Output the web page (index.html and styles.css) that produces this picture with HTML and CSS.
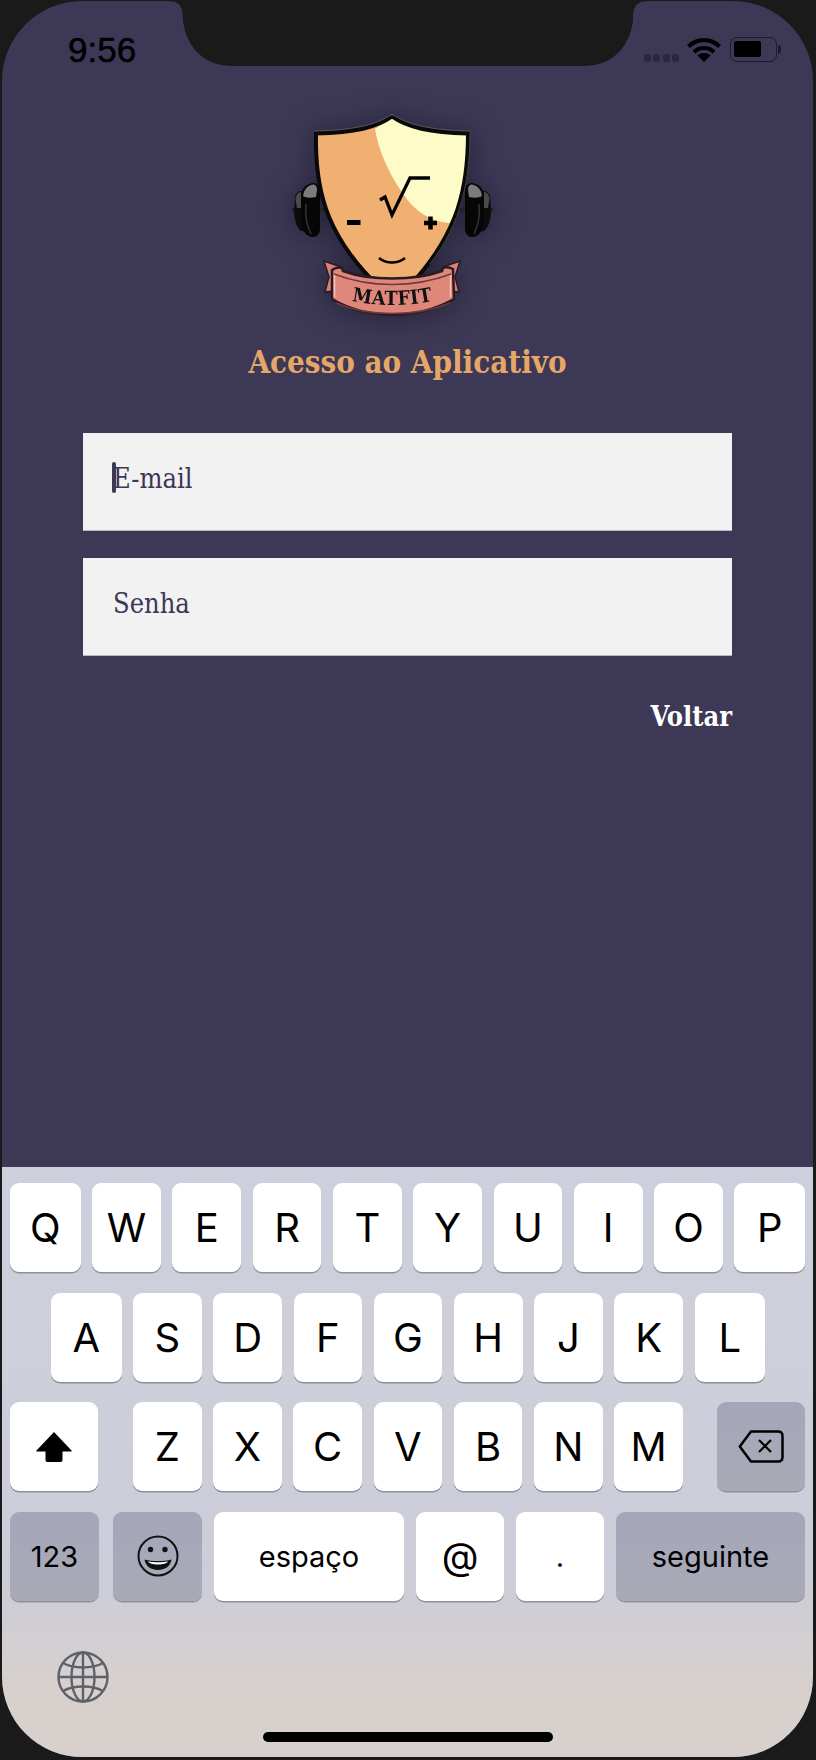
FILE: index.html
```html
<!DOCTYPE html>
<html lang="pt-BR">
<head>
  <meta charset="UTF-8">
  <meta name="viewport" content="width=device-width, initial-scale=1.0">
  <title>Acesso ao Aplicativo</title>
  <link rel="stylesheet" href="styles.css">
</head>
<body>

  <div class="screen">
    <svg class="notch" viewBox="0 0 486 66" width="486" height="66">
      <path d="M0 0H486C472 0 468 4 468 18V20C464 48 446 65 418 65H68C40 65 22 48 18 20V18C18 4 14 0 0 0Z" fill="#1a1a1a"/>
    </svg>

    <div class="app">
      <div class="status">
        <span class="time">9:56</span>
        <div class="status-icons">
          <span class="signal"><i></i><i></i><i></i><i></i></span>
          <svg class="wifi" viewBox="0 0 34 25" width="34" height="25">
            <path d="M1.500 9.500C10 1 24 1 32.500 9.500" fill="none" stroke="#000" stroke-width="4.200"/>
            <path d="M7 15C12.500 9.800 21.500 9.800 27 15" fill="none" stroke="#000" stroke-width="4"/>
            <path d="M17 25L10.500 18.500C14 15.300 20 15.300 23.500 18.500Z" fill="#000"/>
          </svg>
          <div class="battery"><span class="battery-level"></span></div>
          <span class="battery-cap"></span>
        </div>
      </div>

      <svg class="logo" viewBox="0 0 240 230" width="240" height="230">
        <!-- halteres -->
        <g id="peso">
          <rect x="22" y="108" width="34" height="3.500" fill="#222"/>
          <path d="M25 98C25 94 28 91 31 91L38 92V132L31 131C27 128 24 120 24 110Z" fill="#0c0c0c"/>
          <path d="M25.500 99C26 95 28 92 31 92L33 94L32 108L27 108Z" fill="#4a4a4a"/>
          <path d="M31 94C32 88 37 83 44 83C48 84 50 86 50 92V128C50 134 47 137 43 137C36 137 31 130 31 118Z" fill="#060606"/>
          <path d="M33 96C34 89 38 85 44 84.500C46 85 47 87 47 90L46 97C41 98 36 98 33 96Z" fill="#7c7c7c"/>
          <path d="M36 104C35 114 36 124 41 134" fill="none" stroke="#333" stroke-width="1.500"/>
        </g>
        <use href="#peso" transform="translate(245 0) scale(-1 1)"/>

        <!-- escudo -->
        <path d="M122 16C107 27 85 32 46 33C45 88 55 131 102 180L122 192L145 180C188 131 198 88 198 33C160 32 137 27 122 16Z" fill="#efb072"/>
        <path d="M105 29C110 58 125 84 140 103C152 116 165 122 181 123C192 96 197 66 197 33C160 32 137 27 122 16C117 21 110 25 105 29Z" fill="#fdfcc8"/>
        <path d="M122 16.500C107 27.500 85 32.500 46 33.500C45 88 55 131 102 180M145 180C188 131 198 88 198 33.500C160 32.500 137 27.500 122 16.500" fill="none" stroke="#0a0a0a" stroke-width="4"/>
        <path d="M122 14C107 24.500 85 30 44 31" fill="none" stroke="#555" stroke-width="1"/>
        <path d="M122 14C137 24.500 160 30 200 31" fill="none" stroke="#555" stroke-width="1"/>
        <path d="M200 31C200 80 192 122 160 164" fill="none" stroke="#444" stroke-width="1"/>

        <path d="M110 100L115 97L122 115L140 78H160" fill="none" stroke="#000" stroke-width="3.300"/>
        <rect x="77" y="120" width="13.500" height="5" fill="#000"/>
        <path d="M154 123H167M160.500 116.500V129.500" fill="none" stroke="#000" stroke-width="4.500"/>
        <path d="M109 158C116 164 128 164 135 158" fill="none" stroke="#000" stroke-width="2.500"/>

        <!-- faixa -->
        <path d="M54 161L71 167L71 190L55 192L59 177Z" fill="#d98077" stroke="#2a1a22" stroke-width="1.500"/>
        <path d="M190 161L173 167L173 190L189 192L185 177Z" fill="#d98077" stroke="#2a1a22" stroke-width="1.500"/>
        <path d="M62 170C68 166 73 167 73 171C100 181 144 181 172 171C172 167 177 166 183 169L184 199C146 220 98 220 62 199Z" fill="#e0877c" stroke="#2a1a22" stroke-width="2.500"/>
        <path d="M64 174C100 188 144 188 181 174" fill="none" stroke="#6b3c3c" stroke-width="1.500"/>
        <path d="M64.500 175V197M180.500 175V197" fill="none" stroke="#f4c0b8" stroke-width="1.500"/>
        <path d="M66 203C98 217 146 217 180 203" fill="none" stroke="#6b3c3c" stroke-width="1.500"/>
        <path id="arco" d="M83 201Q122 209 162 201" fill="none"/>
        <text class="logo-text"><textPath href="#arco" startOffset="50%" text-anchor="middle">MATFIT</textPath></text>
      </svg>

      <h1>Acesso ao Aplicativo</h1>

      <div class="form">
        <div class="field"><span class="caret"></span>E-mail</div>
        <div class="field">Senha</div>
        <a class="back">Voltar</a>
      </div>
    </div>

    <div class="keyboard">
      <div class="row row-edges">
        <span class="key">Q</span><span class="key">W</span><span class="key">E</span><span class="key">R</span><span class="key">T</span><span class="key">Y</span><span class="key">U</span><span class="key">I</span><span class="key">O</span><span class="key">P</span>
      </div>
      <div class="row row-edges row-middle">
        <span class="key">A</span><span class="key">S</span><span class="key">D</span><span class="key">F</span><span class="key">G</span><span class="key">H</span><span class="key">J</span><span class="key">K</span><span class="key">L</span>
      </div>
      <div class="row">
        <span class="key key-side key-white">
          <svg viewBox="0 0 36 30" width="36" height="30"><path d="M18 0L35.500 18.500C36 19 35.800 19.500 35 19.500H26.500V28C26.500 29.300 25.800 30 24.500 30H11.500C10.200 30 9.500 29.300 9.500 28V19.500H1C.2 19.500 0 19 .5 18.500Z" fill="#000"/></svg>
        </span>
        <div class="row-letters">
          <span class="key">Z</span><span class="key">X</span><span class="key">C</span><span class="key">V</span><span class="key">B</span><span class="key">N</span><span class="key">M</span>
        </div>
        <span class="key key-side key-fn">
          <svg viewBox="0 0 46 33" width="46" height="33">
            <path d="M13 1.500H40C43 1.500 44.500 3 44.500 6V27C44.500 30 43 31.500 40 31.500H13L1.800 16.500Z" fill="none" stroke="#000" stroke-width="2.500" stroke-linejoin="round"/>
            <path d="M21 10L33 22M33 10L21 22" fill="none" stroke="#000" stroke-width="2.200"/>
          </svg>
        </span>
      </div>
      <div class="row row-bottom">
        <span class="key key-fn key-small key-num">123</span>
        <span class="key key-fn key-emoji">
          <svg viewBox="0 0 42 42" width="42" height="42">
            <circle cx="21" cy="21" r="19.500" fill="none" stroke="#111" stroke-width="2"/>
            <circle cx="13.500" cy="14.500" r="2.700" fill="#111"/>
            <circle cx="28" cy="14.500" r="2.700" fill="#111"/>
            <path d="M7.500 24.500C15 26.500 27 26.500 34.500 24.500C33.500 31.500 27.500 35 21 35C14.500 35 8.500 31.500 7.500 24.500Z" fill="#111"/>
            <path d="M11 26.500C17 27.500 25 27.500 31 26.500C30 28.500 26 29.500 21 29.500C16 29.500 12 28.500 11 26.500Z" fill="#fff"/>
          </svg>
        </span>
        <span class="key key-small key-space">espaço</span>
        <span class="key key-small key-mid key-at">@</span>
        <span class="key key-small key-mid">.</span>
        <span class="key key-fn key-small key-next">seguinte</span>
      </div>

      <div class="keyboard-foot">
        <svg class="globe" viewBox="0 0 52 52" width="52" height="52">
          <g fill="none" stroke="#5d6169" stroke-width="2.400">
            <circle cx="26" cy="26" r="24.500"/>
            <ellipse cx="26" cy="26" rx="11.500" ry="24.500"/>
            <path d="M26 1.500V50.500M1.500 26H50.500"/>
            <path d="M6 12C17 18 35 18 46 12M6 40C17 34 35 34 46 40"/>
          </g>
        </svg>
        <span class="home-bar"></span>
      </div>
    </div>
  </div>

</body>
</html>
```

FILE: styles.css
```css
:root {
  --cor-fundo: #3c3855;
  --cor-moldura: #1a1a1a;
  --cor-titulo: #e5a767;
  --cor-campo: #f2f2f2;
}

* {
  box-sizing: border-box;
}

html, body {
  height: 100%;
}

body {
  margin: 0;
  padding: 1px 3px 3px 2px;
  background-color: var(--cor-moldura);
  font-family: "DejaVu Serif Condensed", "DejaVu Serif", serif;
}

.screen {
  position: relative;
  height: 100%;
  display: flex;
  flex-direction: column;
  border-radius: 80px;
  overflow: hidden;
  background-color: var(--cor-fundo);
}

.notch {
  position: absolute;
  top: 0;
  left: 163px;
}

.app {
  flex: 1;
  display: flex;
  flex-direction: column;
}

/* barra de status */

.status {
  height: 99px;
  display: flex;
  justify-content: space-between;
  padding: 29px 32px 0 66px;
}

.time {
  font-family: "Liberation Sans", Arial, sans-serif;
  font-size: 35px;
  line-height: 40px;
  color: #000;
  -webkit-text-stroke: 0.5px #000;
}

.status-icons {
  display: flex;
  align-items: flex-start;
  padding-top: 7px;
}

.signal {
  display: flex;
  gap: 2.500px;
  margin: 17px 8px 0 0;
}

.signal i {
  width: 7px;
  height: 7.500px;
  border-radius: 3px;
  background-color: #2a2740;
}

.wifi {
  margin-right: 9px;
}

.battery {
  width: 47px;
  height: 25px;
  padding: 3px;
  border: 1.500px solid #1d1b2c;
  border-radius: 7px;
}

.battery-level {
  display: block;
  width: 27px;
  height: 16px;
  border-radius: 2px;
  background-color: #000;
}

.battery-cap {
  width: 3px;
  height: 9px;
  margin: 8px 0 0 1px;
  border-radius: 0 3px 3px 0;
  background-color: #1d1b2c;
}

/* logo e titulo */

.logo {
  display: block;
  margin-left: 268px;
  filter: drop-shadow(0 2px 14px rgba(20, 18, 36, 0.55));
}

.logo-text {
  font-family: "DejaVu Serif Condensed", "DejaVu Serif", serif;
  font-weight: bold;
  font-size: 19.500px;
  letter-spacing: 0.5px;
  fill: #111;
}

h1 {
  margin: 13px 0 0;
  text-align: center;
  font-size: 31px;
  line-height: 38px;
  font-weight: bold;
  color: var(--cor-titulo);
}

/* formulario */

.form {
  display: flex;
  flex-direction: column;
  margin-top: 52px;
  padding: 0 81px;
}

.field {
  position: relative;
  height: 98px;
  padding: 28px 30px 0;
  margin-bottom: 27px;
  font-size: 27px;
  line-height: 36px;
  color: var(--cor-fundo);
  background-color: var(--cor-campo);
  border-bottom: 1px solid #b9b8c4;
}

.caret {
  position: absolute;
  top: 29px;
  left: 29px;
  width: 4px;
  height: 31px;
  border-radius: 2px;
  background-color: var(--cor-fundo);
}

.back {
  align-self: flex-end;
  margin-top: 17px;
  font-size: 27px;
  line-height: 34px;
  font-weight: bold;
  color: #fff;
}

/* teclado */

.keyboard {
  height: 590px;
  display: flex;
  flex-direction: column;
  gap: 20.500px;
  padding: 16px 8px 0;
  background: linear-gradient(#cdd0dc 0%, #cccdd8 70%, #d8d0cc 90%, #d8d0cc 100%);
}

.row {
  display: flex;
  gap: 11.600px;
  height: 89px;
}

.row-edges .key:first-child,
.row-edges .key:last-child {
  flex: 0 0 70.500px;
}

.row-middle {
  margin: 0 40px 0 41px;
}

.row-letters {
  flex: 1;
  display: flex;
  gap: 11.500px;
  margin: 0 22.600px 0 23.400px;
}

.row-bottom {
  gap: 12px;
}

.key {
  flex: 1;
  display: flex;
  align-items: center;
  justify-content: center;
  border-radius: 9px;
  background-color: #fff;
  box-shadow: 0 1.500px 0 #8e8f99;
  font-family: Inter, "Liberation Sans", sans-serif;
  font-size: 40px;
  color: #000;
}

.key-small {
  font-size: 29px;
}

.key-side {
  flex: 0 0 88px;
}

.key-fn {
  background: linear-gradient(#a4a6ba, #aaaab6);
}

.key-white {
  background: #fff;
}

.key-num {
  flex: 0 0 89px;
  margin-right: 2px;
}

.key-emoji {
  flex: 0 0 89px;
}

.key-space {
  flex: 0 0 190px;
}

.key-mid {
  flex: 0 0 88px;
}

.key-at {
  font-size: 38px;
}

.keyboard-foot {
  display: flex;
  flex-direction: column;
  margin-top: 30px;
}

.globe {
  margin-left: 47px;
}

.home-bar {
  align-self: center;
  width: 290px;
  height: 10px;
  margin-top: 29px;
  border-radius: 5px;
  background-color: #000;
}
```
